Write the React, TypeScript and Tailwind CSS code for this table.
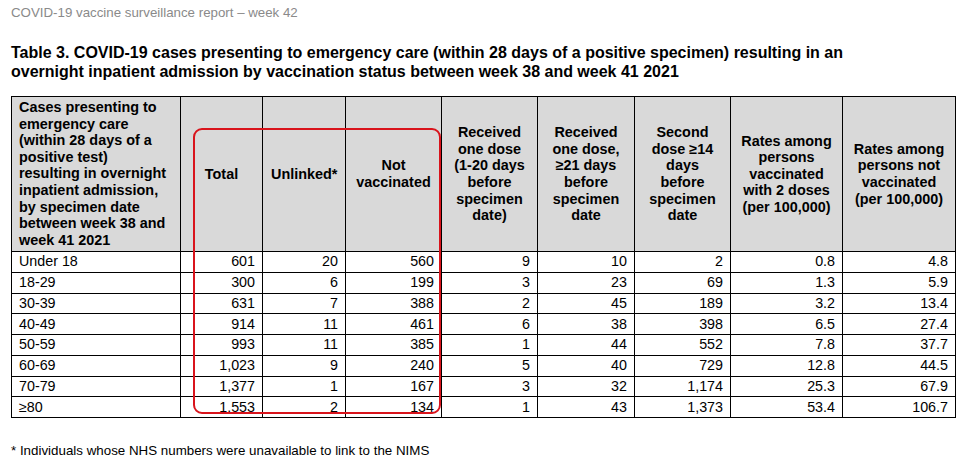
const rows: string[][] = [
  ['Under 18', '601', '20', '560', '9', '10', '2', '0.8', '4.8'],
  ['18-29', '300', '6', '199', '3', '23', '69', '1.3', '5.9'],
  ['30-39', '631', '7', '388', '2', '45', '189', '3.2', '13.4'],
  ['40-49', '914', '11', '461', '6', '38', '398', '6.5', '27.4'],
  ['50-59', '993', '11', '385', '1', '44', '552', '7.8', '37.7'],
  ['60-69', '1,023', '9', '240', '5', '40', '729', '12.8', '44.5'],
  ['70-79', '1,377', '1', '167', '3', '32', '1,174', '25.3', '67.9'],
  ['≥80', '1,553', '2', '134', '1', '43', '1,373', '53.4', '106.7'],
]

const widths = ['w-[169px]', 'w-[82px]', 'w-[83px]', 'w-[96px]', 'w-[96px]', 'w-[97px]', 'w-[96px]', 'w-[112px]', 'w-[113px]']

const headers = [
  'Total',
  'Unlinked*',
  'Not vaccinated',
  'Received one dose (1-20 days before specimen date)',
  'Received one dose, ≥21 days before specimen date',
  'Second dose ≥14 days before specimen date',
  'Rates among persons vaccinated with 2 doses (per 100,000)',
  'Rates among persons not vaccinated (per 100,000)',
]

const firstHeader = [
  'Cases presenting to',
  'emergency care',
  '(within 28 days of a',
  'positive test)',
  'resulting in overnight',
  'inpatient admission,',
  'by specimen date',
  'between week 38 and',
  'week 41 2021',
]

export default function App() {
  return (
    <div className="w-[977px] h-[460px] bg-white overflow-hidden font-['Liberation_Sans',Arial,sans-serif] text-black">
      <div className="pl-[11px] pt-[4px] text-[13.3px] leading-[18px] text-[#8a8a8a]">
        COVID-19 vaccine surveillance report – week 42
      </div>

      <h1 className="pl-[11px] pt-[21px] w-[900px] text-[16px] leading-[19px] font-bold">
        Table 3. COVID-19 cases presenting to emergency care (within 28 days of a positive specimen) resulting in an
        <br />
        overnight inpatient admission by vaccination status between week 38 and week 41 2021
      </h1>

      {/* Table */}
      <div className="relative ml-[11px] mt-[15px] w-[944px]">
        <table className="table-fixed border-collapse w-[944px] text-[14.3px]">
          <colgroup>
            {widths.map((w, i) => (
              <col key={i} className={w} />
            ))}
          </colgroup>
          <thead>
            <tr className="h-[155px] bg-[#d9d9d9]">
              <th className="border border-black text-left align-top font-bold text-[14.4px] leading-[16.6px] pl-[7px] pr-[2px] pt-[2px] whitespace-nowrap">
                {firstHeader.map((l, i) => (
                  <div key={i}>{l}</div>
                ))}
              </th>
              {headers.map((h, i) => (
                <th
                  key={i}
                  className="border border-black text-center align-middle font-bold text-[14.4px] leading-[16.6px] px-[8px]"
                >
                  {h}
                </th>
              ))}
            </tr>
          </thead>
          <tbody>
            {rows.map((r, ri) => (
              <tr key={ri} className="h-[20.75px]">
                {r.map((c, ci) => (
                  <td
                    key={ci}
                    className={
                      ci === 0
                        ? 'border border-black px-[7px] py-0 leading-[17px] text-left'
                        : 'border border-black pr-[7px] py-0 leading-[17px] text-right'
                    }
                  >
                    {c}
                  </td>
                ))}
              </tr>
            ))}
          </tbody>
        </table>

        {/* red highlight box */}
        <div className="absolute left-[182px] top-[32px] w-[248px] h-[286px] border-[2.5px] border-[#d9141c] rounded-[9px] pointer-events-none" />
      </div>

      <div className="pl-[11px] pt-[25px] text-[13.35px] leading-[16px]">
        * Individuals whose NHS numbers were unavailable to link to the NIMS
      </div>
    </div>
  )
}
